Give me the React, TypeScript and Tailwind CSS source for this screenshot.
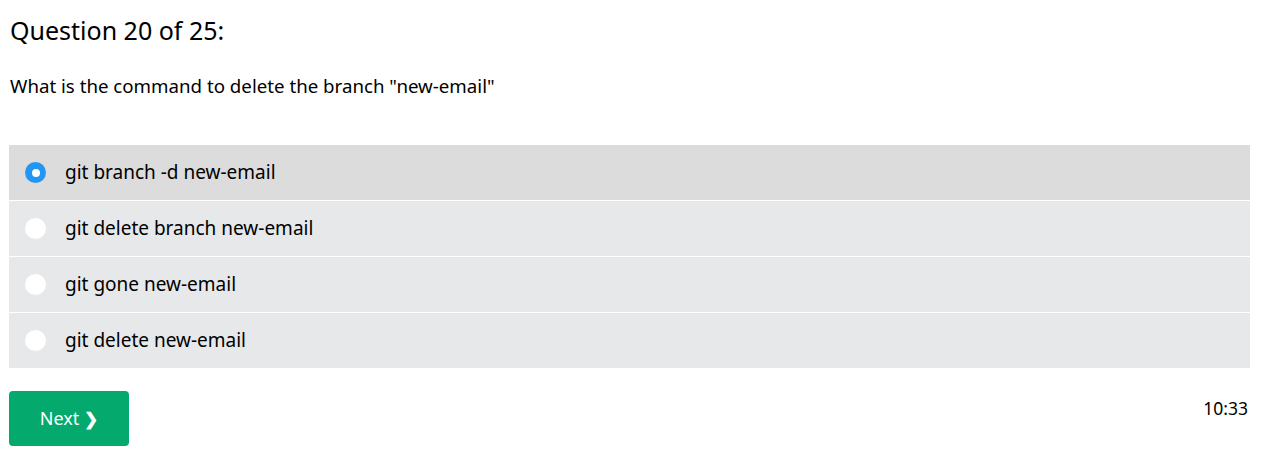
import { useState } from "react";

const options = [
  "git branch -d new-email",
  "git delete branch new-email",
  "git gone new-email",
  "git delete new-email",
];

export default function App() {
  const [picked, setPicked] = useState(0);

  return (
    <main
      className="min-h-screen bg-white pl-[9px] pr-[21px] pt-[13px] text-black"
      style={{ fontFamily: '"Noto Sans", "Open Sans", sans-serif' }}
    >
      <h1 className="pl-px text-[25px] leading-[34px]">Question 20 of 25:</h1>
      <p className="mt-[26px] pl-px text-[18.7px] leading-[26px]">
        What is the command to delete the branch "new-email"
      </p>

      <div className="mt-[46px] flex flex-col gap-px">
        {options.map((o, i) => (
          <label
            key={o}
            onClick={() => setPicked(i)}
            className={`flex h-[55px] cursor-pointer items-center gap-[19px] pl-[16px] ${
              picked === i ? "bg-[#dcdcdc]" : "bg-[#e7e8ea]"
            }`}
          >
            {picked === i ? (
              <span className="flex h-[21px] w-[21px] items-center justify-center rounded-full bg-[#2196f3]">
                <span className="h-[8px] w-[8px] rounded-full bg-white" />
              </span>
            ) : (
              <span className="h-[21px] w-[21px] rounded-full bg-white" />
            )}
            <span className="text-[19px]">{o}</span>
          </label>
        ))}
      </div>

      <div className="mt-[23px] flex items-start justify-between">
        <button className="flex h-[55px] w-[120px] items-center justify-center gap-[5px] rounded-[4px] bg-[#04aa6d] text-[18px] text-white">
          Next <span className="text-[17px] font-bold leading-none">❯</span>
        </button>
        <span className="mt-[4px] pr-[2px] text-[17.5px]">10:33</span>
      </div>
    </main>
  );
}
